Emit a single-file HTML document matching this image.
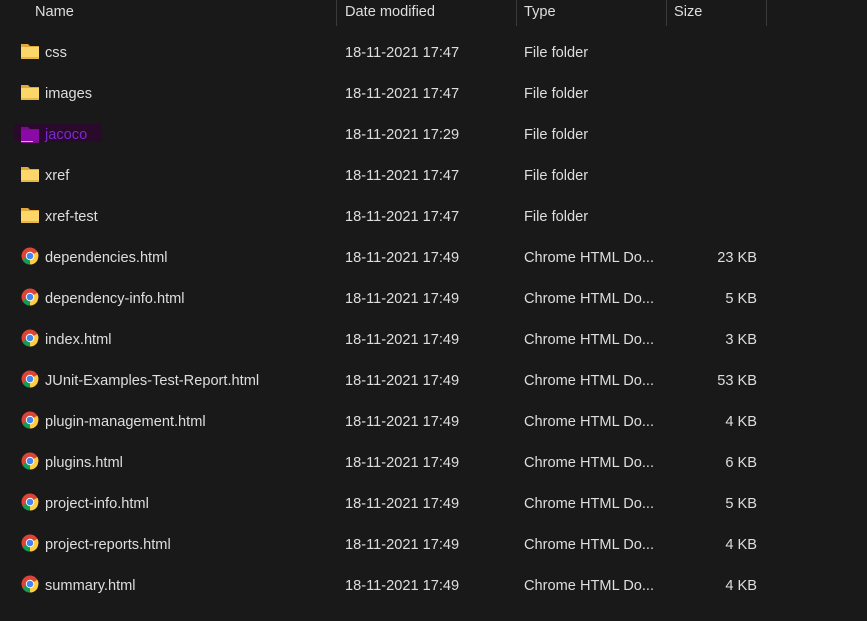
<!DOCTYPE html>
<html><head><style>
body{margin:0;width:867px;height:621px;background:#191919;overflow:hidden;font-family:"Segoe UI","Liberation Sans",sans-serif;font-size:14.6px;color:#dedede;position:relative}
.t{position:absolute;white-space:nowrap;line-height:20px}
.d{position:absolute;top:0;width:1px;height:26px;background:#3a3a3a}
.ic{position:absolute;left:21px}
</style></head><body>
<div class="t" style="left:35px;top:2px">Name</div>
<div class="t" style="left:345px;top:2px">Date modified</div>
<div class="t" style="left:524px;top:2px">Type</div>
<div class="t" style="left:674px;top:2px">Size</div>
<div class="d" style="left:336px"></div>
<div class="d" style="left:516px"></div>
<div class="d" style="left:666px"></div>
<div class="d" style="left:766px"></div>
<div id="rows"></div>
<script>
const folder='<svg width="18" height="16" viewBox="0 0 18 16"><path d="M0 0h7l2 2h9v1H0z" fill="#e0a93a"/><path d="M0 3h18v12H0z" fill="#fcd669"/><path d="M0 13h18v2H0z" fill="#e8b84a"/></svg>';
const chrome='<svg width="18" height="18" viewBox="0 0 18 18"><circle cx="9" cy="9" r="8.5" fill="#db4437"/><path d="M9 9 L1.6 13.3 A8.5 8.5 0 0 0 9 17.5 A8.5 8.5 0 0 0 16.4 13.3 Z" fill="#0f9d58"/><path d="M9 9 L9 17.5 A8.5 8.5 0 0 0 16.4 13.3 L17.4 9 A8.5 8.5 0 0 0 16.4 4.8 Z" fill="#ffcd40"/><path d="M9 9 L1.6 13.3 L6 9 Z" fill="#0f9d58"/><circle cx="9" cy="9" r="4.2" fill="#fff"/><circle cx="9" cy="9" r="3.3" fill="#4285f4"/></svg>';
const rows=[["css","17:47","File folder",""],["images","17:47","File folder",""],["jacoco","17:29","File folder",""],["xref","17:47","File folder",""],["xref-test","17:47","File folder",""],
["dependencies.html","17:49","Chrome HTML Do...","23 KB"],["dependency-info.html","17:49","Chrome HTML Do...","5 KB"],["index.html","17:49","Chrome HTML Do...","3 KB"],["JUnit-Examples-Test-Report.html","17:49","Chrome HTML Do...","53 KB"],["plugin-management.html","17:49","Chrome HTML Do...","4 KB"],["plugins.html","17:49","Chrome HTML Do...","6 KB"],["project-info.html","17:49","Chrome HTML Do...","5 KB"],["project-reports.html","17:49","Chrome HTML Do...","4 KB"],["summary.html","17:49","Chrome HTML Do...","4 KB"]];
let h='';
rows.forEach((r,i)=>{const y=43+i*41;const f=r[3]==='';
if(r[0]==='jacoco'){h+=`<div style="position:absolute;left:14px;top:124px;width:88px;height:18px;background:#2a0a2a;border-radius:3px"></div><div class="ic" style="top:127px"><svg width="18" height="16"><path d="M0 0h7l2 2h9v14H0z" fill="#7a1080"/><rect x="0" y="3" width="18" height="11" fill="#8a0aa8"/><rect x="0" y="14" width="12" height="1" fill="#e8b84a"/></svg></div><div class="t" style="left:45px;top:${y}px;color:#7a2ad0">jacoco</div>`;}
else{h+=`<div class="ic" style="top:${y+(f?1:-1)}px">${f?folder:chrome}</div><div class="t" style="left:45px;top:${y}px">${r[0]}</div>`;}
h+=`<div class="t" style="left:345px;top:${y}px">18-11-2021 ${r[1]}</div><div class="t" style="left:524px;top:${y}px">${r[2]}</div>`;
if(!f)h+=`<div class="t" style="right:110px;top:${y}px">${r[3]}</div>`;});
document.getElementById('rows').innerHTML=h;
</script>
</body></html>
